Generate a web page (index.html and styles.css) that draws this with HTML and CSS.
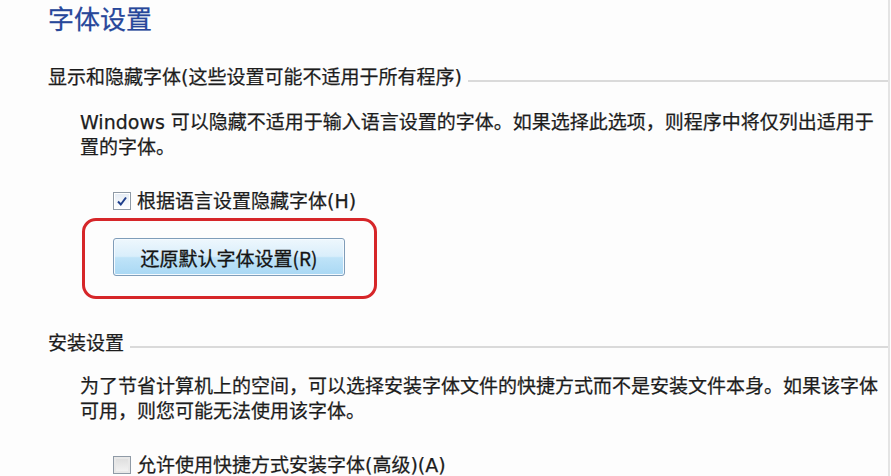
FILE: index.html
```html
<!DOCTYPE html>
<html lang="zh-CN">
<head>
  <meta charset="UTF-8">
  <title>字体设置</title>
  <link rel="stylesheet" href="styles.css">
</head>
<body>
  <div class="page">
    <h1 class="title">字体设置</h1>

    <div class="group-head">显示和隐藏字体(这些设置可能不适用于所有程序)</div>
    <div class="group-body">
      <p class="desc">Windows 可以隐藏不适用于输入语言设置的字体。如果选择此选项，则程序中将仅列出适用于<br>置的字体。</p>

      <label class="check">
        <span class="box checked">
          <svg width="12" height="12" viewBox="0 0 12 12"><path d="M2 6.5 L4.8 9.5 L10 2.5" fill="none" stroke="#1f3f8c" stroke-width="2"/></svg>
        </span>
        根据语言设置隐藏字体(H)
      </label>

      <div class="highlight">
        <button class="btn">还原默认字体设置(R)</button>
      </div>
    </div>

    <div class="group-head second">安装设置</div>
    <div class="group-body">
      <p class="desc tight">为了节省计算机上的空间，可以选择安装字体文件的快捷方式而不是安装文件本身。如果该字体<br>可用，则您可能无法使用该字体。</p>

      <label class="check last">
        <span class="box"></span>
        允许使用快捷方式安装字体(高级)(A)
      </label>
    </div>
  </div>
</body>
</html>
```

FILE: styles.css
```css
html, body {
  margin: 0;
  height: 100%;
  overflow: hidden;
  background: #fdfdfd;
}
body {
  font-family: "DejaVu Sans", "Noto Sans CJK SC", sans-serif;
  color: #1c1c1c;
  -webkit-text-stroke: 0.25px currentColor;
}
.page {
  box-sizing: border-box;
  width: 890px;
  height: 476px;
  padding-left: 48px;
  border-right: 2px solid #e4e4e4;
  white-space: nowrap;
  overflow: hidden;
}
.title {
  margin: 0;
  font-family: "Noto Sans CJK SC", sans-serif;
  font-size: 26px;
  font-weight: normal;
  line-height: 36px;
  color: #27479a;
}
.group-head {
  display: flex;
  align-items: center;
  gap: 6px;
  margin-top: 28px;
  font-size: 19px;
  line-height: 26px;
}
.group-head::after {
  content: "";
  flex: 1;
  margin-top: 8px;
  border-top: 2px solid #dadada;
}
.group-head.second {
  margin-top: 31px;
}
.group-body {
  padding-left: 32px;
  font-size: 19px;
}
.desc {
  margin: 20px 0 0;
  line-height: 25px;
}
.desc.tight {
  margin-top: 18px;
}
.check {
  display: flex;
  align-items: center;
  gap: 6px;
  margin-top: 28px;
  padding-left: 33px;
  line-height: 26px;
}
.check.last {
  margin-top: 28px;
}
.box {
  box-sizing: border-box;
  display: flex;
  align-items: center;
  justify-content: center;
  width: 18px;
  height: 18px;
  border: 1px solid #8f9aa6;
  background: linear-gradient(#dcdcdc, #f4f4f4);
  box-shadow: inset 0 0 0 2px #e8e8e8;
}
.box.checked {
  background: linear-gradient(#e4ebf4, #ffffff);
  box-shadow: inset 0 0 0 1px #fff;
}
.highlight {
  box-sizing: border-box;
  width: 295px;
  height: 81px;
  margin: 4px 0 0 2px;
  padding: 17px 0 0 28px;
  border: 3px solid #d62629;
  border-radius: 14px;
}
.btn {
  width: 232px;
  height: 38px;
  font-family: "Noto Sans CJK SC", sans-serif;
  font-size: 19px;
  color: #141414;
  -webkit-text-stroke: 0.3px currentColor;
  border: 1px solid #7f9db9;
  border-radius: 3px;
  background: linear-gradient(#eef7fd 0%, #d9eefb 48%, #bfe3f8 52%, #a9d8f4 100%);
  box-shadow: inset 0 0 0 1px #f4faff;
}
```
